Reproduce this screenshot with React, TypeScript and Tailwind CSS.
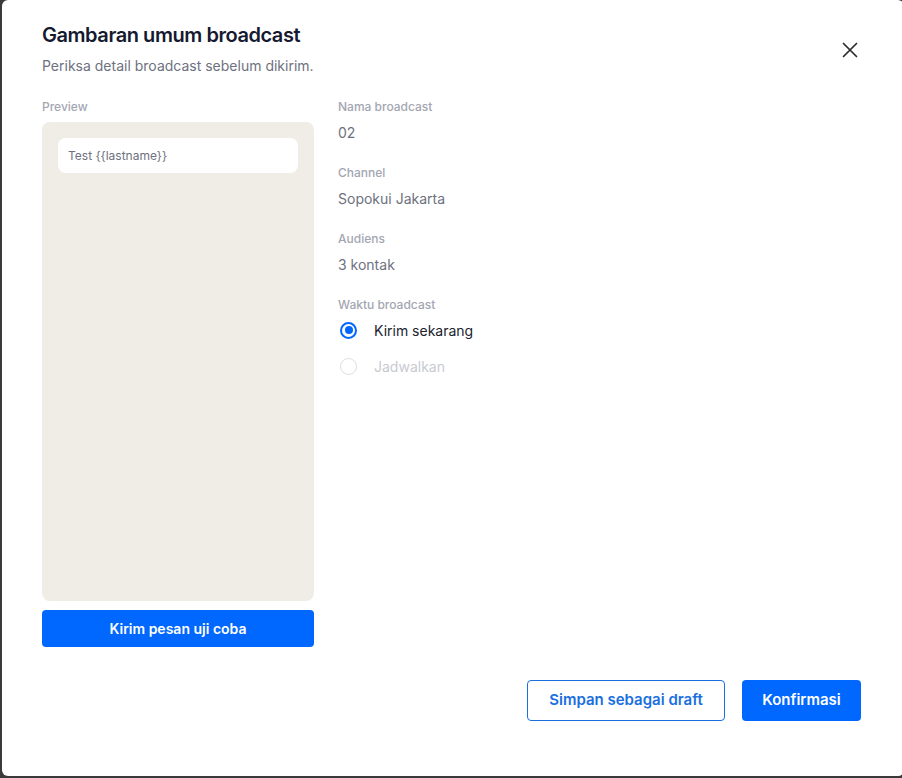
import React, { useState } from "react";

const details = [
  { label: "Nama broadcast", value: "02" },
  { label: "Channel", value: "Sopokui Jakarta" },
  { label: "Audiens", value: "3 kontak" },
];

export default function App() {
  const [when, setWhen] = useState<"now" | "later">("now");

  return (
    <div className="h-[778px] w-[902px] overflow-hidden bg-[#3a3a3a] font-['Inter',sans-serif]">
      <div className="relative ml-[2px] h-[776px] w-[902px] rounded-[6px] bg-white px-10 pt-[21px]">
        <button className="absolute right-[45px] top-[41px] flex h-[18px] w-[18px] items-center justify-center text-[#2b2b2b]">
          <svg width="16" height="16" viewBox="0 0 16 16" fill="none" stroke="currentColor" strokeWidth="1.7" strokeLinecap="round">
            <path d="M1.5 1.5l13 13M14.5 1.5l-13 13" />
          </svg>
        </button>

        <h2 className="text-[20px] font-semibold leading-[28px] tracking-[-0.45px] text-[#151a30]">
          Gambaran umum broadcast
        </h2>
        <p className="mt-[7px] text-[14px] leading-[20px] text-[#6e7180]">
          Periksa detail broadcast sebelum dikirim.
        </p>

        <div className="mt-[23px] flex gap-6">
          <div className="w-[272px]">
            <p className="text-[12px] font-medium leading-[16px] text-[#a3a6b2]">Preview</p>
            <div className="mt-[7px] h-[479px] rounded-[8px] bg-[#efede5] p-4">
              <div className="flex h-[35px] items-center rounded-[8px] bg-white px-[10px] text-[12px] text-[#6e7180]">
                Test {"{{lastname}}"}
              </div>
            </div>
            <button className="mt-[9px] h-[37px] w-full rounded-[4px] bg-[#0068ff] text-[14px] font-semibold text-white">
              Kirim pesan uji coba
            </button>
          </div>

          <div className="flex-1">
            {details.map((d, i) => (
              <div key={d.label} className={i === 0 ? "" : "mt-[22px]"}>
                <p className="text-[12px] font-medium leading-[16px] text-[#a3a6b2]">{d.label}</p>
                <p className="mt-2 text-[14px] leading-[20px] text-[#6e7180]">{d.value}</p>
              </div>
            ))}

            <div className="mt-[22px]">
              <p className="text-[12px] font-medium leading-[16px] text-[#a3a6b2]">Waktu broadcast</p>
              <label className="mt-[5px] flex h-6 cursor-pointer items-center gap-[17px]" onClick={() => setWhen("now")}>
                <span className="ml-[2px] flex h-[17px] w-[17px] items-center justify-center rounded-full border-2 border-[#0068ff]">
                  {when === "now" && <span className="h-[8px] w-[8px] rounded-full bg-[#0068ff]" />}
                </span>
                <span className="text-[14px] text-[#20232e]">Kirim sekarang</span>
              </label>
              <label className="mt-3 flex h-6 items-center gap-[17px]">
                <span className="ml-[2px] h-[17px] w-[17px] rounded-full border border-[#dcdde2]" />
                <span className="text-[14px] text-[#c8cad1]">Jadwalkan</span>
              </label>
            </div>
          </div>
        </div>

        <div className="mt-[33px] flex justify-end gap-[17px] pr-[3px]">
          <button className="h-[41px] w-[198px] rounded-[4px] border border-[#1a6fe0] bg-white text-[15px] font-semibold text-[#1a6fe0]">
            Simpan sebagai draft
          </button>
          <button className="h-[41px] w-[119px] rounded-[4px] bg-[#0068ff] text-[15px] font-semibold text-white">
            Konfirmasi
          </button>
        </div>
      </div>
    </div>
  );
}
